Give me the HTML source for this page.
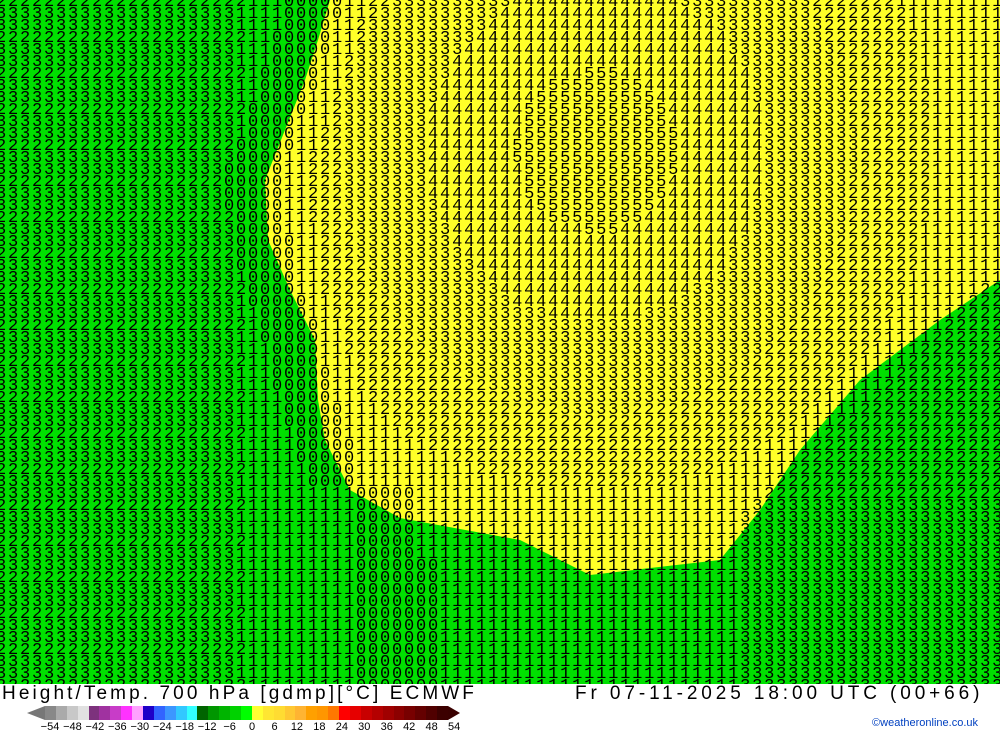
<!DOCTYPE html><html><head><meta charset="utf-8"><style>
body{margin:0;width:1000px;height:733px;overflow:hidden;background:#fff;font-family:"Liberation Sans",sans-serif;position:relative}
#map{position:absolute;left:0;top:0;width:1000px;height:684px;background:#00e000;overflow:hidden}
#txt{position:absolute;left:-4px;top:-3px;font-family:"Liberation Mono",monospace;font-size:17px;line-height:12px;color:#000;white-space:pre;letter-spacing:1.8px}
.t{position:absolute;font-size:19px;color:#000}
.bar{position:absolute;top:706px;height:14px;display:flex;left:45px}
.bar div{width:10.9px;height:14px}
.l{position:absolute;top:721px;font-size:11px;transform:translateX(-50%)}
</style></head><body>
<div id="map">
<svg width="1000" height="684" style="position:absolute;left:0;top:0">
<polygon fill="#ffff28" points="330,0 318,40 305,80 285,130 265,180 268,240 290,290 315,340 318,400 325,440 350,490 400,518 520,540 590,575 720,560 760,510 800,450 860,380 940,320 1000,280 1000,0"/>
</svg>
<div id="txt"></div>
</div>
<div class="t" style="left:2px;top:683px;letter-spacing:3.1px">Height/Temp. 700 hPa [gdmp][°C] ECMWF</div>
<div class="t" style="left:575px;top:683px;letter-spacing:3.9px">Fr 07-11-2025 18:00 UTC (00+66)</div>
<svg style="position:absolute;left:27px;top:706px" width="440" height="14"><polygon points="0,7 18,0 18,14" fill="#777"/><polygon points="421,0 433,7 421,14" fill="#3a0000"/></svg>
<div class="bar" id="bar"></div>
<div id="labs"></div>
<div style="position:absolute;right:22px;top:717px;font-size:11px;color:#0040c0">©weatheronline.co.uk</div>
<script>
var cols=["#888","#aaa","#c8c8c8","#e1e1e1","#7d327d","#a032a0","#c83cc8","#ff32ff","#ffa0ff","#1e00c8","#3264ff","#3c96ff","#32c8ff","#32ffff","#006400","#009600","#00b400","#00d200","#00ff00","#ffff32","#ffe632","#ffdc32","#ffc832","#ffb432","#ffa000","#ff9600","#ff7800","#ff0000","#e60000","#c80000","#b40000","#a00000","#8c0000","#780000","#640000","#500000","#3c0000"];
var b="";cols.forEach(function(c){b+='<div style="background:'+c+'"></div>'});document.getElementById("bar").innerHTML=b;
var L="";for(var i=0;i<19;i++){var v=-54+i*6;L+='<div class="l" style="left:'+(50+i*22.45)+'px">'+(v<0?'\u2212'+(-v):v)+'</div>'}document.getElementById("labs").innerHTML=L;
var s="";
for(var r=0;r<58;r++){var line="";for(var c=0;c<84;c++){var x=c*12.1,y=r*12;
var v;var inY=true;
var lx=y<180?330-y*0.36:(y<290?265+(y-180)*0.2:(y<490?290+(y-290)*0.3:400));
if(x<lx-5||(y>280&&x>1000-(y-280)*1.1&&y<560)||y>560)inY=false;
if(inY){var d=Math.hypot(x-600,y-150);v=d<80?5:d<170?4:d<260?3:d<340?2:1;if(x<lx+40)v=(x<lx+15)?0:1;}
else{v=x<250?(r%3==0?2:(c<20?3:1)):(x>750?(y>500?3:2):1);if(Math.abs(x-lx)<40)v=0;}
line+=v;}s+=line+"\n";}
document.getElementById("txt").textContent=s;
</script>
</body></html>
